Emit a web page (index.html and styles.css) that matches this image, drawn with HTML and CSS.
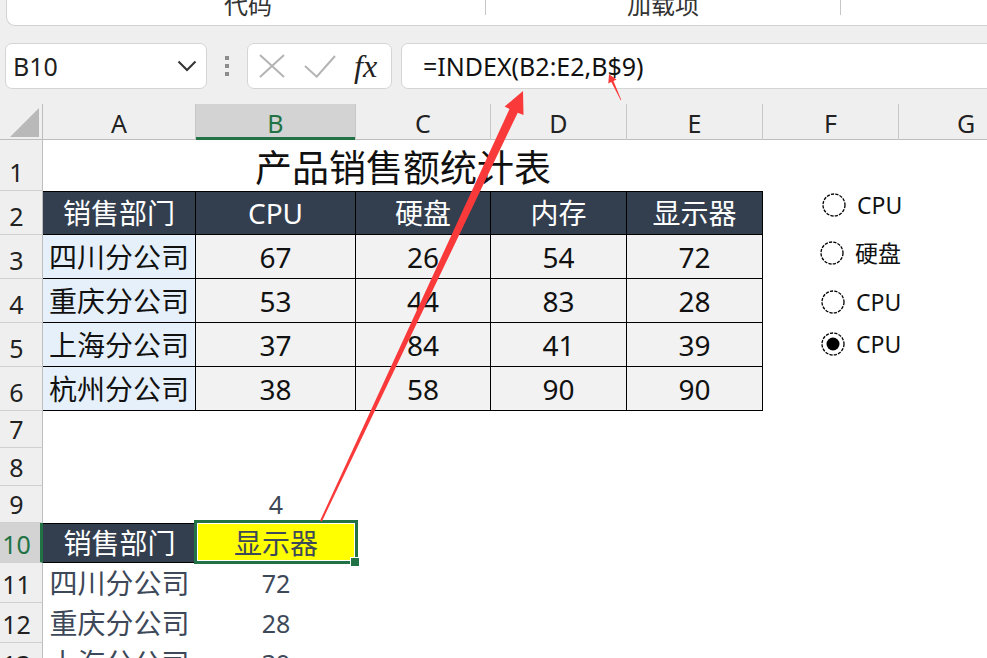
FILE: index.html
```html
<!DOCTYPE html>
<html lang="zh-CN">
<head>
<meta charset="utf-8">
<title>产品销售额统计表</title>
<link rel="stylesheet" href="styles.css">
</head>
<body>
<div class="ribbon">
  <div class="tab t1"><span>代码</span></div>
  <div class="sep"></div>
  <div class="tab t2"><span>加载项</span></div>
  <div class="sep"></div>
  <div class="tab t3"></div>
</div>

<div class="fbar">
  <div class="namebox">
    <span class="ref">B10</span>
    <svg class="chev" width="20" height="12" viewBox="0 0 20 12"><polyline points="1.5,1.5 10,10 18.5,1.5" fill="none" stroke="#333" stroke-width="2"/></svg>
  </div>
  <div class="grip"><i></i><i></i><i></i></div>
  <div class="fxbox">
    <svg class="ico-x" width="26" height="24" viewBox="0 0 26 24"><path d="M1 1 L25 23 M25 1 L1 23" stroke="#b4b4b4" stroke-width="2" fill="none"/></svg>
    <svg class="ico-ok" width="33" height="23" viewBox="0 0 33 23"><polyline points="2,11 13.7,21.7 32,1" fill="none" stroke="#b4b4b4" stroke-width="2"/></svg>
    <span class="fx">fx</span>
  </div>
  <div class="formula">=INDEX(B2:E2,B$9)</div>
</div>

<div class="sheet">
  <div class="corner"><div class="tri"></div></div>
  <div class="ch">A</div>
  <div class="ch on">B</div>
  <div class="ch">C</div>
  <div class="ch">D</div>
  <div class="ch">E</div>
  <div class="ch">F</div>
  <div class="ch">G</div>

  <div class="rh">1</div>
  <div class="title">产品销售额统计表</div>
  <div class="blank2"></div>

  <div class="rh">2</div>
  <div class="tc th top">销售部门</div>
  <div class="tc th top">CPU</div>
  <div class="tc th top">硬盘</div>
  <div class="tc th top">内存</div>
  <div class="tc th top">显示器</div>
  <div class="blank2"></div>

  <div class="rh">3</div>
  <div class="tc dept">四川分公司</div>
  <div class="tc num">67</div>
  <div class="tc num">26</div>
  <div class="tc num">54</div>
  <div class="tc num">72</div>
  <div class="blank2"></div>

  <div class="rh">4</div>
  <div class="tc dept">重庆分公司</div>
  <div class="tc num">53</div>
  <div class="tc num">44</div>
  <div class="tc num">83</div>
  <div class="tc num">28</div>
  <div class="blank2"></div>

  <div class="rh">5</div>
  <div class="tc dept">上海分公司</div>
  <div class="tc num">37</div>
  <div class="tc num">84</div>
  <div class="tc num">41</div>
  <div class="tc num">39</div>
  <div class="blank2"></div>

  <div class="rh">6</div>
  <div class="tc dept">杭州分公司</div>
  <div class="tc num">38</div>
  <div class="tc num">58</div>
  <div class="tc num">90</div>
  <div class="tc num">90</div>
  <div class="blank2"></div>

  <div class="rh">7</div>
  <div class="blank7"></div>

  <div class="rh">8</div>
  <div class="blank7"></div>

  <div class="rh">9</div>
  <div class="cell"></div>
  <div class="cell val">4</div>
  <div class="blank5"></div>

  <div class="rh on">10</div>
  <div class="cell hd">销售部门</div>
  <div class="cell yel">显示器<span class="selbox"></span><span class="handle"></span></div>
  <div class="blank5"></div>

  <div class="rh">11</div>
  <div class="cell txt">四川分公司</div>
  <div class="cell val">72</div>
  <div class="blank5"></div>

  <div class="rh">12</div>
  <div class="cell txt">重庆分公司</div>
  <div class="cell val">28</div>
  <div class="blank5"></div>

  <div class="rh">13</div>
  <div class="cell txt">上海分公司</div>
  <div class="cell val">39</div>
  <div class="blank5"></div>
</div>

<div class="radio r1">
  <svg width="24" height="24" viewBox="0 0 24 24"><circle cx="12" cy="12" r="11" fill="#fff" stroke="#000" stroke-width="1.3" stroke-dasharray="3.2 1.2"/></svg>
  <span>CPU</span>
</div>
<div class="radio r2">
  <svg width="24" height="24" viewBox="0 0 24 24"><circle cx="12" cy="12" r="11" fill="#fff" stroke="#000" stroke-width="1.3" stroke-dasharray="3.2 1.2"/></svg>
  <span>硬盘</span>
</div>
<div class="radio r3">
  <svg width="24" height="24" viewBox="0 0 24 24"><circle cx="12" cy="12" r="11" fill="#fff" stroke="#000" stroke-width="1.3" stroke-dasharray="3.2 1.2"/></svg>
  <span>CPU</span>
</div>
<div class="radio r4">
  <svg width="24" height="24" viewBox="0 0 24 24"><circle cx="12" cy="12" r="11" fill="#fff" stroke="#000" stroke-width="1.3" stroke-dasharray="3.2 1.2"/><circle cx="12" cy="12" r="6.5" fill="#000"/></svg>
  <span>CPU</span>
</div>

<svg class="arrows" width="987" height="658" viewBox="0 0 987 658">
  <polygon points="320.1,520.6 509.5,109 504.6,106.6 523,91 523.5,115 517.7,112.8 321.9,521.4" fill="#fa3a3a"/>
  <polygon points="620.7,100.3 611.3,82 608.3,83.4 609,74.3 616.5,79.6 613.5,81 621.3,100" fill="#fa3a3a"/>
</svg>
</body>
</html>
```

FILE: styles.css
```css
* { box-sizing: border-box; }

body {
  margin: 0;
  width: 987px;
  height: 658px;
  overflow: hidden;
  position: relative;
  background: #efefef;
  font-family: "Noto Sans", "Noto Sans CJK SC", sans-serif;
  color: #1f1f1f;
}

/* ribbon tabs */
.ribbon {
  display: flex;
  align-items: flex-start;
  height: 26px;
  margin-left: 6px;
  padding-left: 4px;
  background: #fff;
  border-left: 1px solid #d2d2d2;
  border-bottom: 1px solid #d2d2d2;
  border-bottom-left-radius: 9px;
  overflow: hidden;
}
.tab {
  display: flex;
  justify-content: center;
  font-family: "Noto Sans CJK SC", sans-serif;
  font-size: 24px;
  line-height: 24px;
  color: #333;
}
.tab span { margin-top: -8px; }
.t1 { width: 474px; }
.t2 { width: 354px; }
.t3 { flex: 1; }
.sep { width: 1px; height: 15px; background: #c6c6c6; flex-shrink: 0; }

/* formula bar */
.fbar {
  display: flex;
  align-items: center;
  height: 46px;
  margin-top: 17px;
  padding-left: 5px;
}
.namebox {
  width: 202px;
  height: 46px;
  flex-shrink: 0;
  display: flex;
  align-items: center;
  justify-content: space-between;
  padding: 0 9px 0 7px;
  background: #fff;
  border: 1px solid #d5d5d5;
  border-radius: 7px;
}
.ref { font-size: 25px; color: #1f1f1f; }
.grip {
  margin-left: 18px;
  width: 4px;
  display: flex;
  flex-direction: column;
  gap: 4px;
}
.grip i { display: block; width: 4px; height: 4px; background: #8c8c8c; }
.fxbox {
  margin-left: 18px;
  width: 145px;
  height: 46px;
  flex-shrink: 0;
  display: flex;
  align-items: center;
  padding-left: 11px;
  background: #fff;
  border: 1px solid #d5d5d5;
  border-radius: 7px;
}
.ico-ok { margin-left: 18px; }
.fx {
  margin-left: 18px;
  font-family: "Liberation Serif", serif;
  font-style: italic;
  font-size: 32px;
  line-height: 32px;
  color: #222;
}
.formula {
  margin-left: 9px;
  width: 620px;
  height: 46px;
  flex-shrink: 0;
  display: flex;
  align-items: center;
  padding-left: 21px;
  background: #fff;
  border: 1px solid #d5d5d5;
  border-radius: 7px;
  font-size: 25px;
  color: #111;
}

/* sheet grid */
.sheet {
  margin-top: 15px;
  display: grid;
  width: 1034px;
  grid-template-columns: 43px 153px 160px 135px 136px 136px 136px 135px;
  grid-template-rows: 36px 51px 44px 44px 44px 44px 44px 37px 38px 37px 40px 40px 40px 40px;
  background: #fff;
}
.corner {
  background: #efefef;
  border-right: 1px solid #bdbdbd;
  box-shadow: inset 0 -1px #bdbdbd;
  position: relative;
}
.tri {
  position: absolute;
  left: 10px;
  top: 4px;
  width: 29px;
  height: 29px;
  background: #b9b9b9;
  clip-path: polygon(100% 0, 100% 100%, 0 100%);
}
.ch {
  background: #efefef;
  border-right: 1px solid #c8c8c8;
  box-shadow: inset 0 -1px #bdbdbd;
  display: flex;
  align-items: flex-end;
  justify-content: center;
  padding-bottom: 4px;
  font-size: 25px;
  line-height: 25px;
  color: #222;
}
.ch.on {
  background: #d3d3d3;
  color: #217346;
  box-shadow: inset 0 -3px #217346;
}
.rh {
  background: #efefef;
  border-right: 1px solid #bdbdbd;
  border-bottom: 1px solid #d0d0d0;
  display: flex;
  align-items: flex-end;
  justify-content: center;
  padding: 0 9px 5px 0;
  font-size: 25px;
  line-height: 25px;
  color: #222;
}
.rh.on {
  background: #d3d3d3;
  color: #217346;
  border-right: 3px solid #217346;
  padding-right: 7px;
}
.title {
  grid-column: span 5;
  display: flex;
  align-items: center;
  justify-content: center;
  padding-top: 2px;
  font-family: "Noto Sans CJK SC", sans-serif;
  font-size: 37px;
  line-height: 1;
  color: #111;
}
.blank2 { grid-column: span 2; }
.blank5 { grid-column: span 5; }
.blank7 { grid-column: span 7; }

.tc {
  border-right: 1px solid #000;
  border-bottom: 1px solid #000;
  display: flex;
  align-items: center;
  justify-content: center;
  font-size: 28px;
  line-height: 1;
  color: #111;
}
.tc.top { border-top: 1px solid #000; }
.th { background: #333f4f; color: #fff; }
.dept { background: #e6f0fa; }
.num { background: #f2f2f2; }

.cell {
  display: flex;
  align-items: center;
  justify-content: center;
  font-size: 28px;
  line-height: 1;
  color: #3d4859;
  position: relative;
}
.cell.val { font-size: 25px; }
.cell.hd {
  background: #333f4f;
  color: #fff;
  border-top: 1px solid #000;
  border-bottom: 1px solid #000;
}
.cell.yel { background: #ffff00; color: #3d4859; }
.selbox {
  position: absolute;
  left: -2px;
  top: -3px;
  right: -2px;
  bottom: -1px;
  border: 3px solid #217346;
  box-shadow: inset 0 0 0 1px #fff;
}
.handle {
  position: absolute;
  left: 154px;
  top: 34px;
  width: 9px;
  height: 9px;
  background: #217346;
  border: 1px solid #fff;
  border-right: none;
  border-bottom: none;
}

/* radio controls floating on the sheet */
.radio {
  position: absolute;
  display: flex;
  align-items: center;
  gap: 11px;
  height: 24px;
  font-size: 23px;
  line-height: 1;
  color: #111;
}
.radio svg { display: block; }
.r1 { left: 822px; top: 193px; }
.r2 { left: 820px; top: 241px; }
.r3 { left: 821px; top: 290px; }
.r4 { left: 821px; top: 332px; }

.arrows {
  position: absolute;
  left: 0;
  top: 0;
  pointer-events: none;
}
```
